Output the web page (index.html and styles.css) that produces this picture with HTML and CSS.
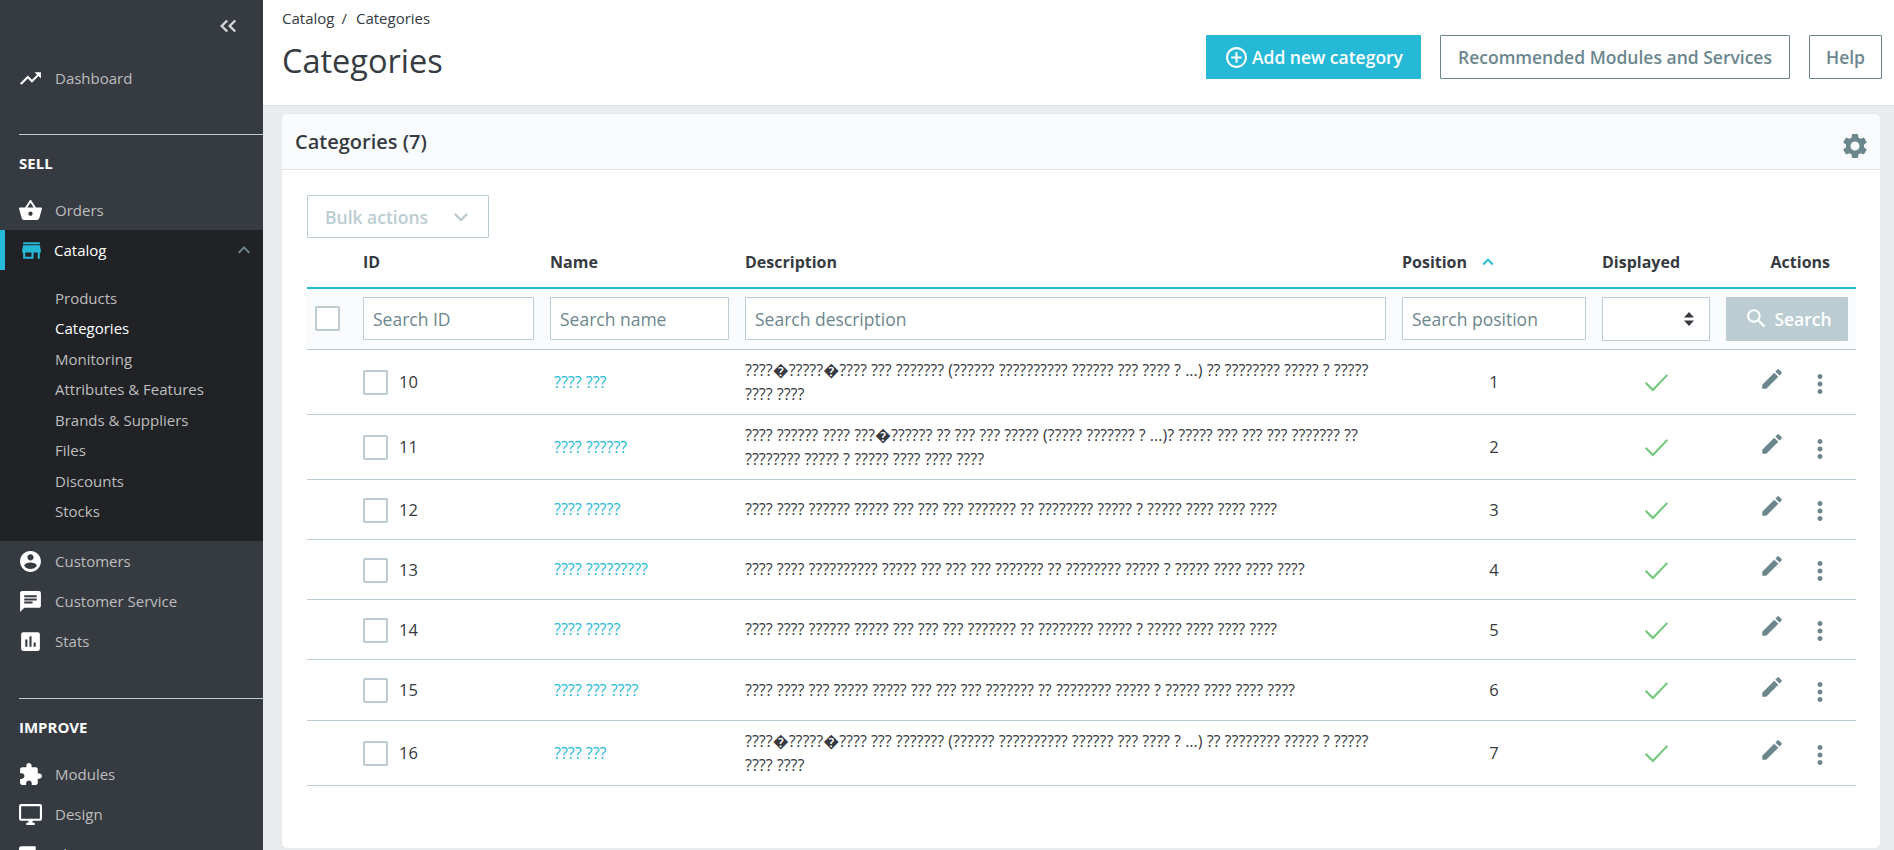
FILE: index.html
```html
<!DOCTYPE html>
<html lang="en">
<head>
<meta charset="utf-8">
<title>Categories</title>
<link rel="stylesheet" href="styles.css">
</head>
<body>
<svg class="defs" width="0" height="0" aria-hidden="true">
  <symbol id="i-trend" viewBox="0 0 24 24"><path d="M16 6l2.29 2.29-4.88 4.88-4-4L2 16.59 3.41 18l6-6 4 4 6.3-6.29L22 12V6z"/></symbol>
  <symbol id="i-basket" viewBox="0 0 24 24"><path d="M17.21 9l-4.38-6.56c-.19-.28-.51-.42-.83-.42-.32 0-.64.14-.83.43L6.79 9H2c-.55 0-1 .45-1 1 0 .09.01.18.04.27l2.54 9.27c.23.84 1 1.46 1.92 1.46h13c.92 0 1.69-.62 1.93-1.46l2.54-9.27L23 10c0-.55-.45-1-1-1h-4.79zM9 9l3-4.4L15 9H9zm3 8c-1.1 0-2-.9-2-2s.9-2 2-2 2 .9 2 2-.9 2-2 2z"/></symbol>
  <symbol id="i-store" viewBox="0 0 24 24"><path d="M20 4H4v2h16V4zm1 10v-2l-1-5H4l-1 5v2h1v6h10v-6h4v6h2v-6h1zm-9 4H6v-4h6v4z"/></symbol>
  <symbol id="i-account" viewBox="0 0 24 24"><path d="M12 2C6.48 2 2 6.48 2 12s4.48 10 10 10 10-4.48 10-10S17.52 2 12 2zm0 3c1.66 0 3 1.34 3 3s-1.34 3-3 3-3-1.34-3-3 1.34-3 3-3zm0 14.2c-2.5 0-4.71-1.28-6-3.22.03-1.99 4-3.08 6-3.08 1.99 0 5.97 1.09 6 3.08-1.29 1.94-3.5 3.22-6 3.22z"/></symbol>
  <symbol id="i-chat" viewBox="0 0 24 24"><path d="M20 2H4c-1.1 0-1.99.9-1.99 2L2 22l4-4h14c1.1 0 2-.9 2-2V4c0-1.1-.9-2-2-2zM6 9h12v2H6V9zm8 5H6v-2h8v2zm4-6H6V6h12v2z"/></symbol>
  <symbol id="i-stats" viewBox="0 0 24 24"><path d="M19 3H5c-1.1 0-2 .9-2 2v14c0 1.1.9 2 2 2h14c1.1 0 2-.9 2-2V5c0-1.1-.9-2-2-2zM9 17H7v-7h2v7zm4 0h-2V7h2v10zm4 0h-2v-4h2v4z"/></symbol>
  <symbol id="i-puzzle" viewBox="0 0 24 24"><path d="M20.5 11H19V7c0-1.1-.9-2-2-2h-4V3.5C13 2.12 11.88 1 10.5 1S8 2.12 8 3.5V5H4c-1.1 0-1.99.9-1.99 2v3.8H3.5c1.49 0 2.7 1.21 2.7 2.7s-1.21 2.7-2.7 2.7H2V20c0 1.1.9 2 2 2h3.8v-1.5c0-1.49 1.21-2.7 2.7-2.7 1.49 0 2.7 1.21 2.7 2.7V22H17c1.1 0 2-.9 2-2v-4h1.5c1.38 0 2.5-1.12 2.5-2.5S21.88 11 20.5 11z"/></symbol>
  <symbol id="i-desktop" viewBox="0 0 24 24"><path d="M21 2H3c-1.1 0-2 .9-2 2v12c0 1.1.9 2 2 2h7v2H8v2h8v-2h-2v-2h7c1.1 0 2-.9 2-2V4c0-1.1-.9-2-2-2zm0 14H3V4h18v12z"/></symbol>
  <symbol id="i-truck" viewBox="0 0 24 24"><path d="M20 8h-3V4H3c-1.1 0-2 .9-2 2v11h2c0 1.66 1.34 3 3 3s3-1.34 3-3h6c0 1.66 1.34 3 3 3s3-1.34 3-3h2v-5l-3-4zM6 18.5c-.83 0-1.5-.67-1.5-1.5s.67-1.5 1.5-1.5 1.5.67 1.5 1.5-.67 1.5-1.5 1.5zm13.5-9l1.96 2.5H17V9.5h2.5zm-1.5 9c-.83 0-1.5-.67-1.5-1.5s.67-1.5 1.5-1.5 1.5.67 1.5 1.5-.67 1.5-1.5 1.5z"/></symbol>
  <symbol id="i-dleft" viewBox="0 0 24 24"><path d="M11.2 6.500 5.700 12l5.500 5.500M19.200 6.500 13.700 12l5.500 5.500" fill="none" stroke="currentColor" stroke-width="2.400"/></symbol>
  <symbol id="i-up" viewBox="0 0 24 24"><path d="M12 8l-6 6 1.41 1.41L12 10.83l4.59 4.58L18 14z"/></symbol>
  <symbol id="i-down" viewBox="0 0 24 24"><path d="M16.59 8.59 12 13.17 7.41 8.59 6 10l6 6 6-6z"/></symbol>
  <symbol id="i-plus" viewBox="0 0 24 24"><path d="M13 7h-2v4H7v2h4v4h2v-4h4v-2h-4V7zm-1-5C6.48 2 2 6.48 2 12s4.48 10 10 10 10-4.48 10-10S17.52 2 12 2zm0 18c-4.41 0-8-3.59-8-8s3.59-8 8-8 8 3.59 8 8-3.59 8-8 8z"/></symbol>
  <symbol id="i-gear" viewBox="0 0 24 24"><path d="M19.14 12.94c.04-.3.06-.61.06-.94 0-.32-.02-.64-.07-.94l2.03-1.58c.18-.14.23-.41.12-.61l-1.92-3.32c-.12-.22-.37-.29-.59-.22l-2.39.96c-.5-.38-1.03-.7-1.62-.94l-.36-2.54c-.04-.24-.24-.41-.48-.41h-3.84c-.24 0-.43.17-.47.41l-.36 2.54c-.59.24-1.13.57-1.62.94l-2.39-.96c-.22-.08-.47 0-.59.22L2.74 8.87c-.12.21-.08.47.12.61l2.03 1.58c-.05.3-.09.63-.09.94s.02.64.07.94l-2.03 1.58c-.18.14-.23.41-.12.61l1.92 3.32c.12.22.37.29.59.22l2.39-.96c.5.38 1.03.7 1.62.94l.36 2.54c.05.24.24.41.48.41h3.84c.24 0 .44-.17.47-.41l.36-2.54c.59-.24 1.13-.56 1.62-.94l2.39.96c.22.08.47 0 .59-.22l1.92-3.32c.12-.22.07-.47-.12-.61l-2.01-1.58zM12 15.6c-1.98 0-3.6-1.62-3.6-3.6s1.62-3.6 3.6-3.6 3.6 1.62 3.6 3.6-1.62 3.6-3.6 3.6z"/></symbol>
  <symbol id="i-search" viewBox="0 0 24 24"><path d="M15.5 14h-.79l-.28-.27C15.41 12.59 16 11.11 16 9.5 16 5.91 13.09 3 9.5 3S3 5.91 3 9.5 5.91 16 9.5 16c1.61 0 3.09-.59 4.23-1.57l.27.28v.79l5 4.99L20.49 19l-4.99-5zm-6 0C7.01 14 5 11.99 5 9.5S7.01 5 9.5 5 14 7.01 14 9.5 11.99 14 9.5 14z"/></symbol>
  <symbol id="i-edit" viewBox="0 0 24 24"><path d="M3 17.25V21h3.75L17.81 9.94l-3.75-3.75L3 17.25zM20.71 7.04c.39-.39.39-1.02 0-1.41l-2.34-2.34c-.39-.39-1.02-.39-1.41 0l-1.83 1.83 3.75 3.75 1.83-1.83z"/></symbol>
  <symbol id="i-more" viewBox="0 0 24 24"><path d="M12 8c1.1 0 2-.9 2-2s-.9-2-2-2-2 .9-2 2 .9 2 2 2zm0 2c-1.1 0-2 .9-2 2s.9 2 2 2 2-.9 2-2-.9-2-2-2zm0 6c-1.1 0-2 .9-2 2s.9 2 2 2 2-.9 2-2-.9-2-2-2z"/></symbol>
  <symbol id="i-check" viewBox="0 0 24 24"><path d="M3 13l6 6L21 6.500" fill="none" stroke="currentColor" stroke-width="1.700"/></symbol>
</svg>

<div class="app">
  <nav class="sidebar">
    <div class="collapse"><svg class="ico-collapse"><use href="#i-dleft"/></svg></div>
    <a class="nav-item"><svg class="ico"><use href="#i-trend"/></svg><span>Dashboard</span></a>

    <div class="nav-section">SELL</div>
    <a class="nav-item"><svg class="ico"><use href="#i-basket"/></svg><span>Orders</span></a>
    <div class="nav-open">
      <a class="nav-item nav-active"><svg class="ico"><use href="#i-store"/></svg><span>Catalog</span><svg class="ico-caret"><use href="#i-up"/></svg></a>
      <ul class="subnav">
        <li>Products</li>
        <li class="sub-active">Categories</li>
        <li>Monitoring</li>
        <li>Attributes &amp; Features</li>
        <li>Brands &amp; Suppliers</li>
        <li>Files</li>
        <li>Discounts</li>
        <li>Stocks</li>
      </ul>
    </div>
    <a class="nav-item"><svg class="ico"><use href="#i-account"/></svg><span>Customers</span></a>
    <a class="nav-item"><svg class="ico"><use href="#i-chat"/></svg><span>Customer Service</span></a>
    <a class="nav-item"><svg class="ico"><use href="#i-stats"/></svg><span>Stats</span></a>

    <div class="nav-section nav-section-2">IMPROVE</div>
    <a class="nav-item"><svg class="ico"><use href="#i-puzzle"/></svg><span>Modules</span></a>
    <a class="nav-item"><svg class="ico"><use href="#i-desktop"/></svg><span>Design</span></a>
    <a class="nav-item"><svg class="ico"><use href="#i-truck"/></svg><span>Shipping</span></a>
  </nav>

  <main class="main">
    <header class="topbar">
      <div class="top-left">
        <div class="crumbs"><span>Catalog</span><span class="crumb-sep">/</span><span>Categories</span></div>
        <h1 class="title">Categories</h1>
      </div>
      <div class="top-actions">
        <a class="btn btn-primary"><svg class="btn-ico"><use href="#i-plus"/></svg>Add new category</a>
        <a class="btn btn-outline">Recommended Modules and Services</a>
        <a class="btn btn-outline btn-help">Help</a>
      </div>
    </header>

    <section class="card">
      <div class="card-head">
        <h2 class="card-title">Categories (7)</h2>
        <svg class="gear"><use href="#i-gear"/></svg>
      </div>
      <div class="card-body">
        <div class="bulk"><span>Bulk actions</span><svg class="bulk-caret"><use href="#i-down"/></svg></div>
        <table class="grid">
          <colgroup>
            <col class="c-check"><col class="c-id"><col class="c-name"><col class="c-desc"><col class="c-pos"><col class="c-disp"><col class="c-act">
          </colgroup>
          <thead>
            <tr class="head-row">
              <th></th>
              <th>ID</th>
              <th>Name</th>
              <th>Description</th>
              <th><span class="sorted">Position<svg class="sort-ico"><use href="#i-up"/></svg></span></th>
              <th>Displayed</th>
              <th class="th-actions">Actions</th>
            </tr>
            <tr class="filter-row">
              <td class="filter-check"><span class="box"></span></td>
              <td><input class="field" placeholder="Search ID"></td>
              <td><input class="field" placeholder="Search name"></td>
              <td><input class="field" placeholder="Search description"></td>
              <td><input class="field" placeholder="Search position"></td>
              <td><div class="select"><svg class="select-arrows" viewBox="0 0 10 14"><path d="M5 0 10 5.500H0zM5 14 0 8.500H10z"/></svg></div></td>
              <td><a class="btn-search"><svg class="search-ico"><use href="#i-search"/></svg>Search</a></td>
            </tr>
          </thead>
          <tbody>
            <tr class="row-tall">
              <td></td>
              <td><div class="id-cell"><span class="box"></span><span>10</span></div></td>
              <td class="name"><a>???? ???</a></td>
              <td class="desc">????�?????�???? ??? ??????? (?????? ?????????? ?????? ??? ???? ? ...) ?? ???????? ????? ? ????? ???? ????</td>
              <td class="pos">1</td>
              <td class="disp"><svg class="check"><use href="#i-check"/></svg></td>
              <td><div class="acts"><svg class="act-edit"><use href="#i-edit"/></svg><svg class="act-more"><use href="#i-more"/></svg></div></td>
            </tr>
            <tr class="row-tall">
              <td></td>
              <td><div class="id-cell"><span class="box"></span><span>11</span></div></td>
              <td class="name"><a>???? ??????</a></td>
              <td class="desc">???? ?????? ???? ???�?????? ?? ??? ??? ????? (????? ??????? ? ...)? ????? ??? ??? ??? ??????? ?? ???????? ????? ? ????? ???? ???? ????</td>
              <td class="pos">2</td>
              <td class="disp"><svg class="check"><use href="#i-check"/></svg></td>
              <td><div class="acts"><svg class="act-edit"><use href="#i-edit"/></svg><svg class="act-more"><use href="#i-more"/></svg></div></td>
            </tr>
            <tr class="row-short">
              <td></td>
              <td><div class="id-cell"><span class="box"></span><span>12</span></div></td>
              <td class="name"><a>???? ?????</a></td>
              <td class="desc">???? ???? ?????? ????? ??? ??? ??? ??????? ?? ???????? ????? ? ????? ???? ???? ????</td>
              <td class="pos">3</td>
              <td class="disp"><svg class="check"><use href="#i-check"/></svg></td>
              <td><div class="acts"><svg class="act-edit"><use href="#i-edit"/></svg><svg class="act-more"><use href="#i-more"/></svg></div></td>
            </tr>
            <tr class="row-short">
              <td></td>
              <td><div class="id-cell"><span class="box"></span><span>13</span></div></td>
              <td class="name"><a>???? ?????????</a></td>
              <td class="desc">???? ???? ?????????? ????? ??? ??? ??? ??????? ?? ???????? ????? ? ????? ???? ???? ????</td>
              <td class="pos">4</td>
              <td class="disp"><svg class="check"><use href="#i-check"/></svg></td>
              <td><div class="acts"><svg class="act-edit"><use href="#i-edit"/></svg><svg class="act-more"><use href="#i-more"/></svg></div></td>
            </tr>
            <tr class="row-short">
              <td></td>
              <td><div class="id-cell"><span class="box"></span><span>14</span></div></td>
              <td class="name"><a>???? ?????</a></td>
              <td class="desc">???? ???? ?????? ????? ??? ??? ??? ??????? ?? ???????? ????? ? ????? ???? ???? ????</td>
              <td class="pos">5</td>
              <td class="disp"><svg class="check"><use href="#i-check"/></svg></td>
              <td><div class="acts"><svg class="act-edit"><use href="#i-edit"/></svg><svg class="act-more"><use href="#i-more"/></svg></div></td>
            </tr>
            <tr class="row-mid">
              <td></td>
              <td><div class="id-cell"><span class="box"></span><span>15</span></div></td>
              <td class="name"><a>???? ??? ????</a></td>
              <td class="desc">???? ???? ??? ????? ????? ??? ??? ??? ??????? ?? ???????? ????? ? ????? ???? ???? ????</td>
              <td class="pos">6</td>
              <td class="disp"><svg class="check"><use href="#i-check"/></svg></td>
              <td><div class="acts"><svg class="act-edit"><use href="#i-edit"/></svg><svg class="act-more"><use href="#i-more"/></svg></div></td>
            </tr>
            <tr class="row-tall">
              <td></td>
              <td><div class="id-cell"><span class="box"></span><span>16</span></div></td>
              <td class="name"><a>???? ???</a></td>
              <td class="desc">????�?????�???? ??? ??????? (?????? ?????????? ?????? ??? ???? ? ...) ?? ???????? ????? ? ????? ???? ????</td>
              <td class="pos">7</td>
              <td class="disp"><svg class="check"><use href="#i-check"/></svg></td>
              <td><div class="acts"><svg class="act-edit"><use href="#i-edit"/></svg><svg class="act-more"><use href="#i-more"/></svg></div></td>
            </tr>
          </tbody>
        </table>
      </div>
    </section>
  </main>
</div>
</body>
</html>
```

FILE: styles.css
```css
* { box-sizing: border-box; }
html, body { margin: 0; height: 100%; overflow: hidden; }
body { font-family: "Open Sans", "Noto Sans", sans-serif; font-size: 15px; color: #363a41; background: #eaebec; }
.defs { position: absolute; }
.app { display: flex; height: 850px; overflow: hidden; }

/* Sidebar */
.sidebar { width: 263px; flex: none; height: 850px; overflow: hidden; background: #363a41; color: #bebebe; }
.collapse { height: 58px; display: flex; justify-content: flex-end; padding: 14px 23px 0 0; }
.ico-collapse { width: 24px; height: 24px; color: #d6d6d6; }
.nav-item { display: flex; align-items: center; height: 40px; padding-left: 18px; position: relative; }
.ico { width: 25px; height: 25px; flex: none; fill: #fff; }
.nav-item span { margin-left: 12px; }
.nav-section { margin-top: 36px; height: 56px; border-top: 1px solid #bbcdd2; margin-left: 19px; padding-top: 18px; color: #fff; font-weight: 700; line-height: 21px; }
.nav-section-2 { margin-top: 37px; }
.nav-open { background: #202226; height: 311px; }
.nav-active { color: #fff; border-left: 5px solid #25b9d7; padding-left: 14px; }
.nav-active .ico { fill: #25b9d7; }
.nav-active span { margin-left: 10px; }
.ico-caret { width: 24px; height: 24px; fill: #6c868e; position: absolute; right: 7px; top: 8px; }
.subnav { list-style: none; margin: 0; padding: 13px 0 0 55px; }
.subnav li { height: 30.43px; line-height: 30px; }
.sub-active { color: #fff; }

/* Main */
.main { flex: 1; min-width: 0; display: flex; flex-direction: column; }
.topbar { height: 106px; flex: none; background: #fff; border-bottom: 1px solid #dfe2e4; display: flex; justify-content: space-between; padding: 0 12px 0 19px; }
.crumbs { margin-top: 8px; font-size: 15px; line-height: 20px; color: #363a41; display: flex; }
.crumb-sep { margin: 0 9px 0 7px; }
.title { margin: 11px 0 0; font-size: 32.5px; font-weight: 400; line-height: 44px; color: #363a41; }
.top-actions { display: flex; gap: 19px; padding-top: 35px; align-items: flex-start; }
.btn { height: 44px; display: flex; align-items: center; font-size: 17.5px; border-radius: 1px; padding: 0 17px; white-space: nowrap; }
.btn-primary { background: #25b9d7; color: #fff; font-weight: 600; padding: 0 18px; }
.btn-ico { width: 25px; height: 25px; fill: #fff; margin-right: 3px; }
.btn-outline { background: #fff; border: 1px solid #6c868e; color: #6c868e; font-weight: 600; }
.btn-help { padding: 0 16px; }

/* Card */
.card { margin: 8px 14px 0 19px; height: 734px; background: #fff; border-radius: 5px; box-shadow: 0 0 1px rgba(0,0,0,.08); display: flex; flex-direction: column; overflow: hidden; }
.card-head { height: 56px; flex: none; background: #fafbfc; border-bottom: 1px solid #dfe6e9; display: flex; align-items: center; justify-content: space-between; padding: 0 10px 0 13px; }
.card-title { margin: -1px 0 0; font-size: 20px; font-weight: 600; color: #363a41; }
.gear { width: 30px; height: 30px; fill: #6c868e; margin-top: 9px; }
.card-body { padding: 25px 24px 0 25px; }
.bulk { width: 182px; height: 43px; border: 1px solid #bbcdd2; border-radius: 1px; display: flex; align-items: center; justify-content: space-between; padding: 0 13px 0 17px; color: #bbcdd2; font-size: 17.5px; font-weight: 600; }
.bulk-caret { width: 28px; height: 28px; fill: #bbcdd2; }

/* Table */
.grid { width: 1549px; table-layout: fixed; border-collapse: collapse; }
.c-check { width: 48px; }
.c-id { width: 187px; }
.c-name { width: 195px; }
.c-desc { width: 657px; }
.c-pos { width: 200px; }
.c-disp { width: 124px; }
.c-act { width: 138px; }
.head-row { height: 50px; }
.head-row th { text-align: left; font-size: 16px; font-weight: 700; color: #363a41; padding: 0 8px 2px; border-bottom: 2px solid #25b9d7; vertical-align: middle; }
.head-row .th-actions { text-align: right; padding-right: 26px; }
.sorted { display: inline-flex; align-items: center; }
.sort-ico { width: 22px; height: 22px; fill: #25b9d7; margin-left: 10px; }
.filter-row { height: 61px; background: #fafbfc; border-bottom: 1px solid #bbcdd2; }
.filter-row td { padding: 0 8px; vertical-align: middle; }
.field { display: block; width: 100%; height: 43px; border: 1px solid #bbcdd2; border-radius: 1px; background: #fff; padding: 0 9px; font: 17.5px "Open Sans", sans-serif; color: #363a41; outline: none; }
.field::placeholder { color: #6c868e; opacity: 1; }
.select { height: 44px; border: 1px solid #bbcdd2; background: #fff; display: flex; align-items: center; justify-content: flex-end; padding-right: 15px; }
.select-arrows { width: 10px; height: 14px; fill: #363a41; }
.btn-search { display: flex; align-items: center; justify-content: center; height: 44px; padding-left: 2px; background: #bbcdd2; color: #fff; font-size: 17.5px; font-weight: 600; border-radius: 1px; }
.search-ico { width: 25px; height: 25px; fill: #fff; margin-right: 5px; }
.box { display: block; width: 25px; height: 25px; flex: none; border: 2px solid #bbcdd2; border-radius: 2px; background: #fff; }
.id-cell .box { margin-top: 2px; }
.grid tbody tr { border-bottom: 1px solid #bbcdd2; }
.row-tall { height: 65px; }
.row-short { height: 60px; }
.row-mid { height: 61px; }
.grid tbody td { padding: 0 8px; vertical-align: middle; font-size: 16.5px; color: #363a41; }
.id-cell { display: flex; align-items: center; gap: 11px; }
.grid tbody td.name { font-size: 16px; padding-left: 12px; }
.name a { color: #25b9d7; }
.grid tbody td.desc { font-size: 16px; line-height: 24px; }
.pos { text-align: center; }
.disp { text-align: center; }
.check { display: block; margin: 0 auto; width: 29px; height: 29px; color: #70c87a; fill: none; }
.acts { display: flex; align-items: center; padding-left: 33px; gap: 20px; }
.act-edit { width: 26px; height: 26px; fill: #6c868e; margin-top: -6px; }
.act-more { width: 30px; height: 30px; fill: #6c868e; margin-top: 4px; }
```
